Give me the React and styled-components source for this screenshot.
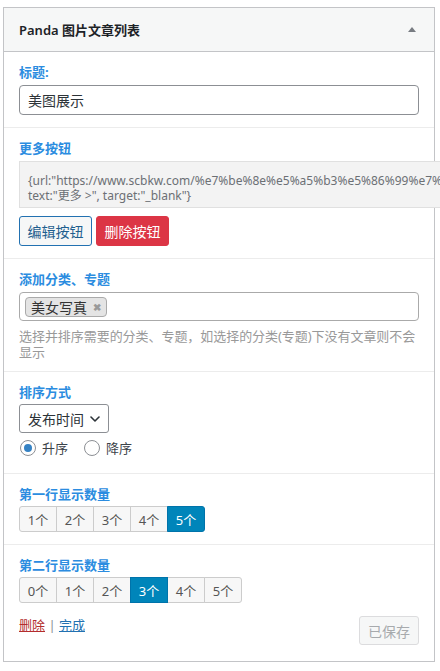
import React, { useState } from "react";
import styled, { createGlobalStyle, css } from "styled-components";

const GlobalStyle = createGlobalStyle`
  html, body { margin: 0; padding: 0; overflow: hidden; background: #fff; }
  body { font-family: "Noto Sans", "Noto Sans CJK SC", sans-serif; color: #2c3338; }
  * { box-sizing: border-box; }
`;

const Page = styled.div`
  padding: 7px 0 0 3px;
  width: 440px;
`;

const Widget = styled.div`
  width: 432px;
  border: 1px solid #c3c4c7;
  background: #fff;
`;

const Header = styled.div`
  height: 44px;
  display: flex;
  align-items: center;
  justify-content: space-between;
  padding: 0 18px 0 15px;
  background: #f6f7f7;
  border-bottom: 1px solid #c3c4c7;
`;

const Title = styled.h3`
  margin: 0;
  font-size: 13px;
  font-weight: 600;
  color: #1d2327;
  line-height: 18px;
`;

const Arrow = styled.span`
  width: 0;
  height: 0;
  border-left: 4px solid transparent;
  border-right: 4px solid transparent;
  border-bottom: 5px solid #787c82;
`;

const Section = styled.div`
  padding: 11px 15px ${(p) => p.$pb ?? 12}px;
  border-bottom: ${(p) => (p.$last ? "none" : "1px solid #ececec")};
`;

const Label = styled.div`
  font-size: 13px;
  font-weight: 700;
  line-height: 18px;
  color: #2b8ce0;
  margin-bottom: ${(p) => p.$mb ?? 4}px;
`;

const TextInput = styled.input`
  display: block;
  width: 100%;
  height: 30px;
  padding: 0 8px;
  font-family: inherit;
  font-size: 14px;
  color: #2c3338;
  border: 1px solid #8c8f94;
  border-radius: 4px;
  outline: none;
`;

const CodeBox = styled.div`
  width: fit-content;
  min-width: 100%;
  padding: 11px 8px 4px;
  background: #f3f3f3;
  border: 1px solid #e0e0e0;
  font-size: 12px;
  line-height: 15px;
  color: #6c7075;
  word-break: normal;
`;

const ButtonRow = styled.div`
  display: flex;
  gap: 4px;
  margin-top: 8px;
`;

const ActionButton = styled.button`
  height: 30px;
  padding: 0 7.5px;
  font-family: inherit;
  font-size: 14px;
  border-radius: 3px;
  cursor: pointer;
  ${(p) =>
    p.$danger
      ? css`
          background: #dc3545;
          border: 1px solid #dc3545;
          color: #fff;
        `
      : css`
          background: #f6f7f7;
          border: 1px solid #2271b1;
          color: #1f5f8f;
        `}
`;

const TagBox = styled.div`
  display: flex;
  align-items: center;
  height: 29px;
  padding: 0 5px;
  border: 1px solid #aaa;
  border-radius: 4px;
`;

const Tag = styled.span`
  display: inline-flex;
  align-items: center;
  gap: 6px;
  height: 20px;
  padding: 0 5px;
  background: #e4e4e4;
  border: 1px solid #aaa;
  border-radius: 4px;
  font-size: 14px;
  color: #333;
`;

const TagRemove = styled.span`
  font-size: 10px;
  color: #999;
  font-weight: 700;
`;

const Description = styled.p`
  margin: 7px 0 0;
  font-size: 13px;
  line-height: 16px;
  color: #999;
  letter-spacing: -0.05px;
`;

const SelectBox = styled.div`
  display: inline-flex;
  align-items: center;
  gap: 6px;
  height: 29px;
  padding: 0 8px;
  border: 1px solid #8c8f94;
  border-radius: 3px;
  font-size: 14px;
  color: #2c3338;
`;

const RadioRow = styled.div`
  display: flex;
  align-items: center;
  gap: 15px;
  margin-top: 7px;
  margin-bottom: 5px;
`;

const RadioLabel = styled.label`
  display: inline-flex;
  align-items: center;
  gap: 6px;
  font-size: 13px;
  line-height: 16px;
  color: #3c434a;
  cursor: pointer;
`;

const RadioCircle = styled.span`
  width: 16px;
  height: 16px;
  margin-left: 1px;
  border-radius: 50%;
  border: 1px solid #8c8f94;
  display: inline-flex;
  align-items: center;
  justify-content: center;
  &::after {
    content: "";
    width: 8px;
    height: 8px;
    border-radius: 50%;
    background: ${(p) => (p.$checked ? "#3582c4" : "transparent")};
  }
`;

const Group = styled.div`
  display: inline-flex;
`;

const GroupButton = styled.button`
  width: 38px;
  height: 26px;
  padding: 0;
  margin-left: -1px;
  font-family: inherit;
  font-size: 13px;
  border: 1px solid ${(p) => (p.$active ? "#0073aa" : "#ccc")};
  background: ${(p) => (p.$active ? "#0085ba" : "#f7f7f7")};
  color: ${(p) => (p.$active ? "#fff" : "#555")};
  position: relative;
  z-index: ${(p) => (p.$active ? 1 : 0)};
  cursor: pointer;
  &:first-child {
    margin-left: 0;
    border-radius: 3px 0 0 3px;
  }
  &:last-child {
    border-radius: 0 3px 3px 0;
  }
`;

const Footer = styled.div`
  display: flex;
  justify-content: space-between;
  align-items: flex-start;
  margin-top: 13px;
  padding-bottom: 4px;
`;

const Links = styled.div`
  font-size: 13px;
  line-height: 18px;
  color: #8c8f94;
`;

const Link = styled.a`
  color: ${(p) => (p.$danger ? "#b32d2e" : "#2271b1")};
  text-decoration: underline;
  cursor: pointer;
`;

const SavedButton = styled.button`
  width: 60px;
  height: 29px;
  font-family: inherit;
  font-size: 14px;
  color: #a7aaad;
  background: #f6f7f7;
  border: 1px solid #dcdcde;
  border-radius: 3px;
`;

const Chevron = () => (
  <svg width="10" height="6" viewBox="0 0 10 6" fill="none">
    <path d="M1 1l4 4 4-4" stroke="#2c3338" strokeWidth="1.6" strokeLinecap="round" strokeLinejoin="round" />
  </svg>
);

export default function App() {
  const [order, setOrder] = useState("asc");
  const [row1, setRow1] = useState(5);
  const [row2, setRow2] = useState(3);

  return (
    <Page>
      <GlobalStyle />
      <Widget>
        <Header>
          <Title>Panda 图片文章列表</Title>
          <Arrow />
        </Header>

        <Section>
          <Label>标题:</Label>
          <TextInput defaultValue="美图展示" />
        </Section>

        <Section>
          <Label>更多按钮</Label>
          <CodeBox>
            {'{url:"https://www.scbkw.com/%e7%be%8e%e5%a5%b3%e5%86%99%e7%9c%9f/", text:"更多 >", target:"_blank"}'}
          </CodeBox>
          <ButtonRow>
            <ActionButton>编辑按钮</ActionButton>
            <ActionButton $danger>删除按钮</ActionButton>
          </ButtonRow>
        </Section>

        <Section $pb={11}>
          <Label>添加分类、专题</Label>
          <TagBox>
            <Tag>
              美女写真
              <TagRemove>✖</TagRemove>
            </Tag>
          </TagBox>
          <Description>选择并排序需要的分类、专题，如选择的分类(专题)下没有文章则不会显示</Description>
        </Section>

        <Section>
          <Label $mb={3}>排序方式</Label>
          <SelectBox>
            发布时间
            <Chevron />
          </SelectBox>
          <RadioRow>
            <RadioLabel onClick={() => setOrder("asc")}>
              <RadioCircle $checked={order === "asc"} />
              升序
            </RadioLabel>
            <RadioLabel onClick={() => setOrder("desc")}>
              <RadioCircle $checked={order === "desc"} />
              降序
            </RadioLabel>
          </RadioRow>
        </Section>

        <Section>
          <Label $mb={3}>第一行显示数量</Label>
          <Group>
            {[1, 2, 3, 4, 5].map((n) => (
              <GroupButton key={n} $active={row1 === n} onClick={() => setRow1(n)}>
                {n}个
              </GroupButton>
            ))}
          </Group>
        </Section>

        <Section $last $pb={12}>
          <Label $mb={3}>第二行显示数量</Label>
          <Group>
            {[0, 1, 2, 3, 4, 5].map((n) => (
              <GroupButton key={n} $active={row2 === n} onClick={() => setRow2(n)}>
                {n}个
              </GroupButton>
            ))}
          </Group>
          <Footer>
            <Links>
              <Link $danger>删除</Link> | <Link>完成</Link>
            </Links>
            <SavedButton disabled>已保存</SavedButton>
          </Footer>
        </Section>
      </Widget>
    </Page>
  );
}
